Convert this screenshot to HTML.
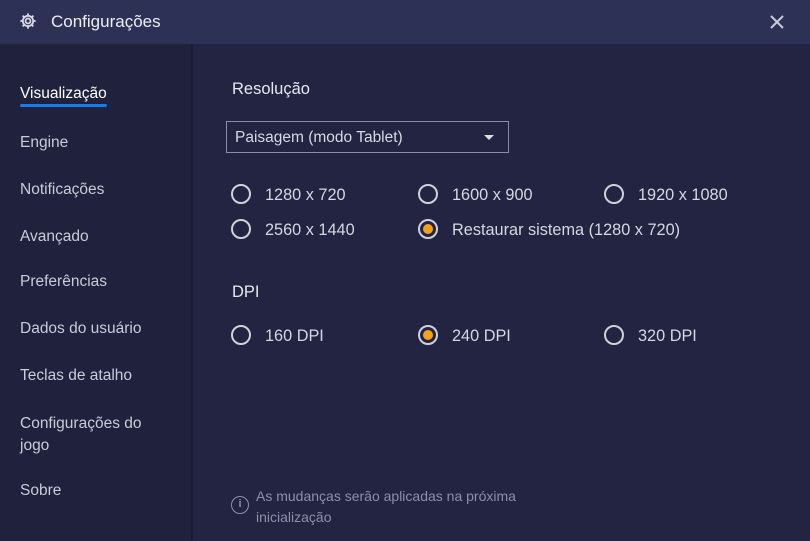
<!DOCTYPE html>
<html><head><meta charset="utf-8"><style>
*{margin:0;padding:0;box-sizing:border-box}
body{width:810px;height:541px;background:#222441;font-family:"Liberation Sans",sans-serif;color:#dcdde8;position:relative;overflow:hidden}
.hdr{position:absolute;left:0;top:0;width:810px;height:44px;background:#2d3156}
.hdr .t{position:absolute;left:51px;top:12px;font-size:17px;color:#eceef5}
.side{position:absolute;left:0;top:44px;width:193px;height:497px;background:#20223d;border-right:2px solid #1a1c33}
.si{position:absolute;left:20px;font-size:15.5px;color:#c9cbd8}
.si.a{color:#fff}
.ul{position:absolute;left:20px;top:104px;width:87px;height:3px;background:#1a7be0;border-radius:2px}
.lbl{position:absolute;font-size:16.5px;color:#e6e7ef}
.sel{position:absolute;left:226px;top:121px;width:283px;height:32px;border:1px solid #8a8ca8}
.sel span{position:absolute;left:8px;top:7px;font-size:15.5px;color:#d8d9e4}
.sel i{position:absolute;right:14px;top:13px;border-left:5px solid transparent;border-right:5px solid transparent;border-top:5px solid #ddd}
.r{position:absolute;font-size:16.3px;color:#d6d7e2}
.r:before{content:"";position:absolute;left-:0;left:-34px;top:-2px;width:20px;height:20px;border:2px solid #d0d1dc;border-radius:50%;box-sizing:border-box}
.r.on:after{content:"";position:absolute;left:-29px;top:3px;width:10px;height:10px;background:#f5a21b;border-radius:50%}
.note{position:absolute;left:256px;top:486px;font-size:14px;line-height:21px;color:#8e90a8}
.ic{position:absolute;left:231px;top:496px;width:18px;height:18px;border:1.5px solid #8e90a8;border-radius:50%;font-size:11px;text-align:center;line-height:15px;color:#8e90a8;font-weight:bold}
</style></head><body>
<div class="hdr">
<svg style="position:absolute;left:19px;top:12px" width="18" height="18" viewBox="0 0 16 16"><g fill="none" stroke="#d8d9e4" stroke-width="1.6"><circle cx="8" cy="8" r="2.2"/><path d="M8 1.2v2.3M8 12.5v2.3M1.2 8h2.3M12.5 8h2.3M3.2 3.2l1.6 1.6M11.2 11.2l1.6 1.6M3.2 12.8l1.6-1.6M11.2 4.8l1.6-1.6"/><circle cx="8" cy="8" r="4.6"/></g></svg>
<div class="t">Configurações</div>
<svg style="position:absolute;left:770px;top:15px" width="14" height="14" viewBox="0 0 14 14"><path d="M1 1L13 13M13 1L1 13" stroke="#c9cbd8" stroke-width="2"/></svg>
</div>
<div class="side"></div>
<div class="si a" style="top:85px">Visualização</div>
<div class="ul"></div>
<div class="si" style="top:134px">Engine</div>
<div class="si" style="top:181px">Notificações</div>
<div class="si" style="top:228px">Avançado</div>
<div class="si" style="top:273px">Preferências</div>
<div class="si" style="top:320px">Dados do usuário</div>
<div class="si" style="top:367px">Teclas de atalho</div>
<div class="si" style="top:413px;line-height:22px">Configurações do<br>jogo</div>
<div class="si" style="top:482px">Sobre</div>

<div class="lbl" style="left:232px;top:80px">Resolução</div>
<div class="sel"><span>Paisagem (modo Tablet)</span><i></i></div>
<div class="r" style="left:265px;top:186px">1280 x 720</div>
<div class="r" style="left:452px;top:186px">1600 x 900</div>
<div class="r" style="left:638px;top:186px">1920 x 1080</div>
<div class="r" style="left:265px;top:221px">2560 x 1440</div>
<div class="r on" style="left:452px;top:221px">Restaurar sistema (1280 x 720)</div>
<div class="lbl" style="left:232px;top:283px">DPI</div>
<div class="r" style="left:265px;top:327px">160 DPI</div>
<div class="r on" style="left:452px;top:327px">240 DPI</div>
<div class="r" style="left:638px;top:327px">320 DPI</div>
<div class="ic">i</div>
<div class="note">As mudanças serão aplicadas na próxima<br>inicialização</div>
</body></html>
